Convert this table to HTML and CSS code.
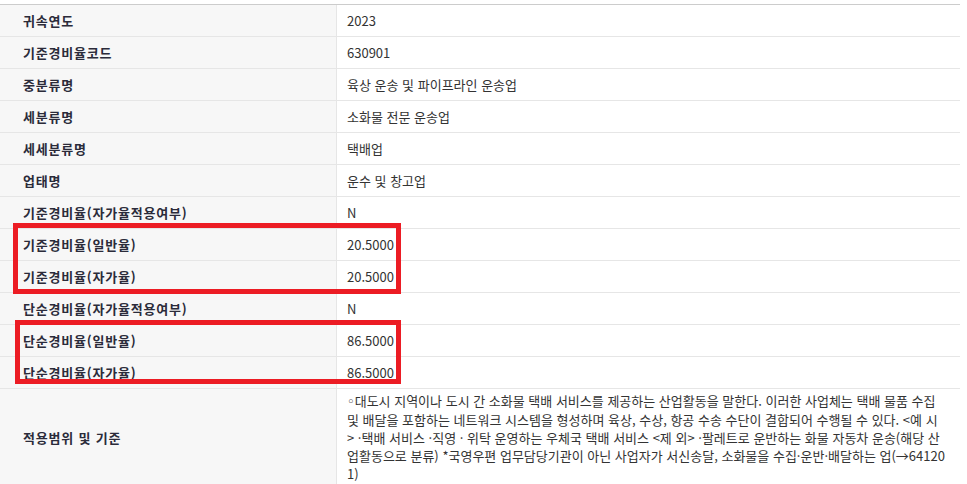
FILE: index.html
```html
<!DOCTYPE html>
<html lang="ko">
<head>
<meta charset="utf-8">
<link rel="stylesheet" href="styles.css">
</head>
<body>
<div class="wrap">
  <table class="info">
    <colgroup><col class="c-label"><col class="c-value"></colgroup>
    <tbody>
      <tr><th>귀속연도</th><td>2023</td></tr>
      <tr><th>기준경비율코드</th><td>630901</td></tr>
      <tr><th>중분류명</th><td>육상 운송 및 파이프라인 운송업</td></tr>
      <tr><th>세분류명</th><td>소화물 전문 운송업</td></tr>
      <tr><th>세세분류명</th><td>택배업</td></tr>
      <tr><th>업태명</th><td>운수 및 창고업</td></tr>
      <tr><th>기준경비율(자가율적용여부)</th><td>N</td></tr>
      <tr><th>기준경비율(일반율)</th><td>20.5000</td></tr>
      <tr><th>기준경비율(자가율)</th><td>20.5000</td></tr>
      <tr><th>단순경비율(자가율적용여부)</th><td>N</td></tr>
      <tr><th>단순경비율(일반율)</th><td>86.5000</td></tr>
      <tr><th>단순경비율(자가율)</th><td>86.5000</td></tr>
      <tr class="long"><th>적용범위 및 기준</th><td><span class="bullet">◦</span>대도시 지역이나 도시 간 소화물 택배 서비스를 제공하는 산업활동을 말한다. 이러한 사업체는 택배 물품 수집<br>및 배달을 포함하는 네트워크 시스템을 형성하며 육상, 수상, 항공 수송 수단이 결합되어 수행될 수 있다. &lt;예 시<br>&gt; ·택배 서비스 ·직영 · 위탁 운영하는 우체국 택배 서비스 &lt;제 외&gt; ·팔레트로 운반하는 화물 자동차 운송(해당 산<br>업활동으로 분류) *국영우편 업무담당기관이 아닌 사업자가 서신송달, 소화물을 수집·운반·배달하는 업(→64120<br>1)</td></tr>
    </tbody>
  </table>
  <div class="mark mark-1"></div>
  <div class="mark mark-2"></div>
</div>
</body>
</html>
```
FILE: styles.css
```css
html, body {
  margin: 0;
  padding: 0;
  background: #fff;
}
body {
  font-family: "Noto Sans CJK KR", "Noto Sans", sans-serif;
  font-size: 13px;
  color: #333;
}
.wrap {
  position: relative;
  padding-top: 4px;
}
.info {
  width: 960px;
  table-layout: fixed;
  border-collapse: separate;
  border-spacing: 0;
  border-top: 1px solid #cccccc;
}
.c-label { width: 337px; }
.c-value { width: 623px; }
.info th,
.info td {
  height: 32px;
  padding: 0;
  box-sizing: border-box;
  border-bottom: 1px solid #e6e6e6;
  vertical-align: middle;
  line-height: 18px;
}
.info th {
  background: #f7f7f7;
  border-right: 1px solid #e6e6e6;
  text-align: left;
  padding-left: 23px;
  font-weight: bold;
  color: #2b2b3a;
  letter-spacing: 0.8px;
}
.info td {
  padding-left: 10px;
  color: #333;
}
.info tr.long th,
.info tr.long td {
  padding-top: 3px;
  padding-bottom: 3px;
  height: auto;
}
.info tr.long td {
  white-space: nowrap;
}
.bullet {
  font-family: "DejaVu Sans", sans-serif;
  font-size: 13px;
}
.mark {
  position: absolute;
  border: 5px solid #ec1c24;
  box-sizing: border-box;
}
.mark-1 {
  left: 13px;
  top: 223px;
  width: 388px;
  height: 71px;
}
.mark-2 {
  left: 15px;
  top: 320px;
  width: 386px;
  height: 64px;
}
```
